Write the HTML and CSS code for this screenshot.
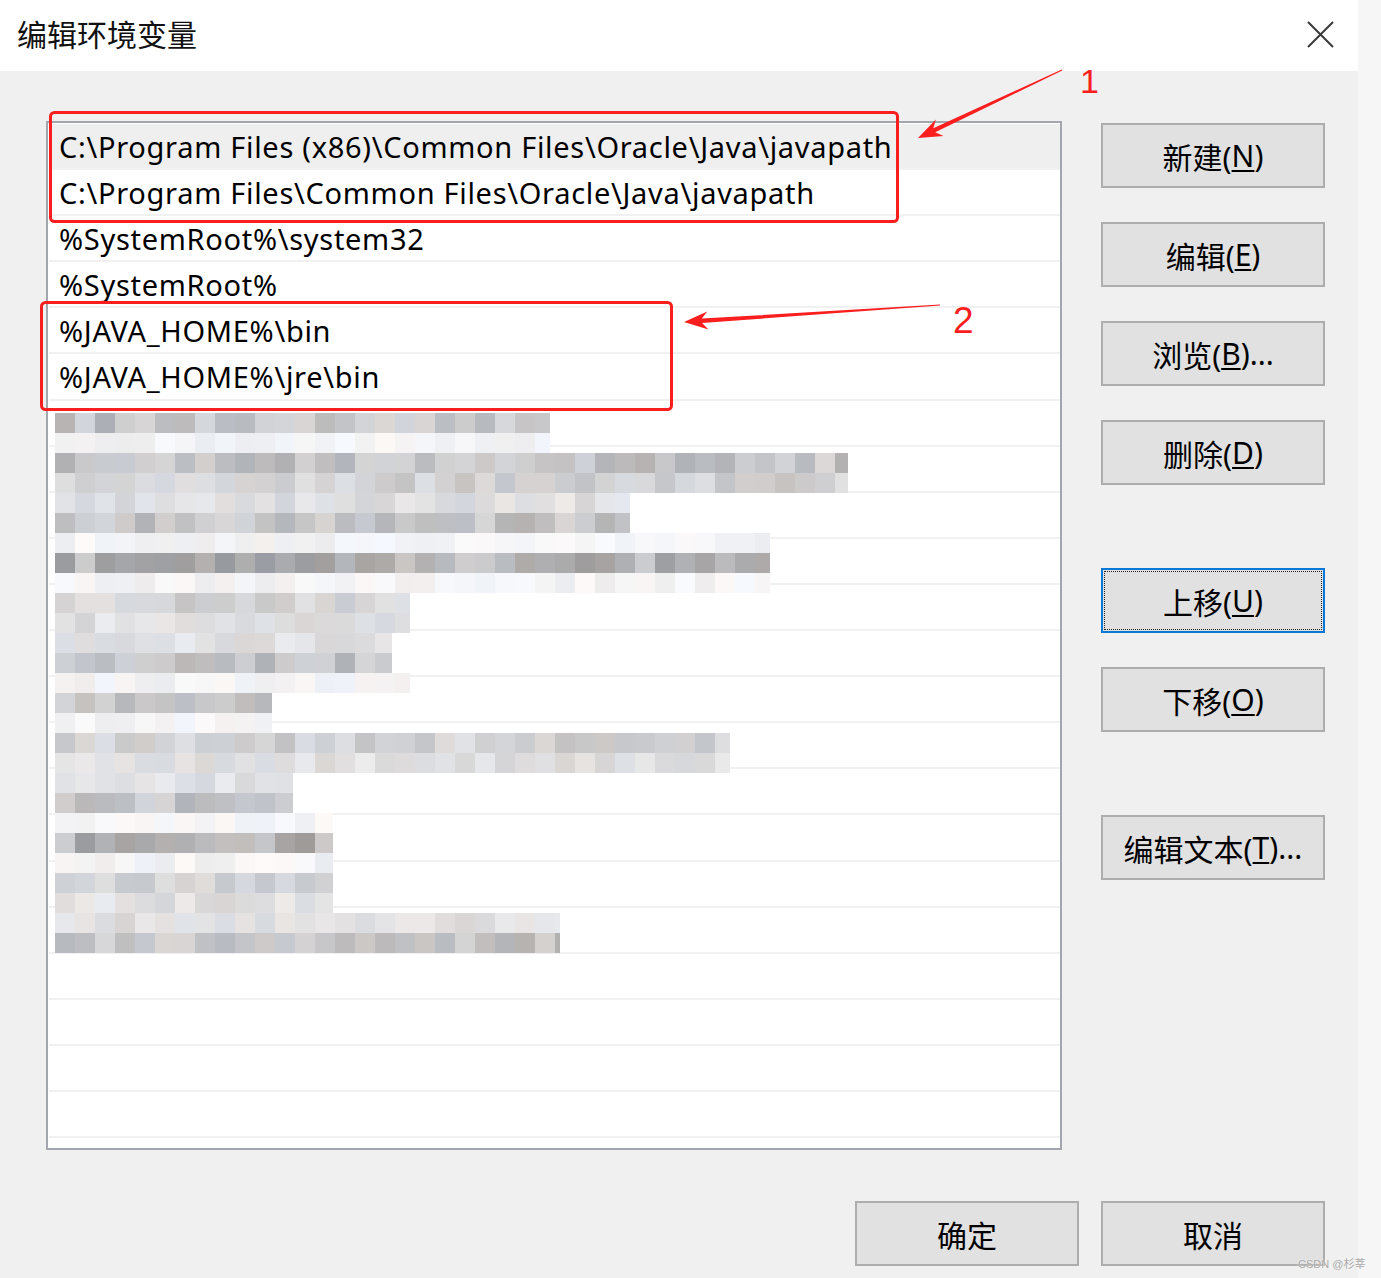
FILE: index.html
```html
<!DOCTYPE html>
<html lang="zh-CN">
<head>
<meta charset="utf-8">
<title>编辑环境变量</title>
<link rel="stylesheet" href="styles.css">
</head>
<body>
<div class="page">
  <div class="dialog">
    <div class="titlebar">
      <span class="title">编辑环境变量</span>
      <span class="close" aria-label="关闭">
        <svg width="27" height="27" viewBox="0 0 27 27"><path d="M1 1 L26 26 M26 1 L1 26" stroke="#3a3a3a" stroke-width="2" fill="none"/></svg>
      </span>
    </div>
    <div class="body">
      <div class="main">
        <div class="list">
          <div class="row hover">C:\Program Files (x86)\Common Files\Oracle\Java\javapath</div>
          <div class="row">C:\Program Files\Common Files\Oracle\Java\javapath</div>
          <div class="row">%SystemRoot%\system32</div>
          <div class="row">%SystemRoot%</div>
          <div class="row">%JAVA_HOME%\bin</div>
          <div class="row">%JAVA_HOME%\jre\bin</div>
          <div class="row"></div><div class="row"></div><div class="row"></div><div class="row"></div>
          <div class="row"></div><div class="row"></div><div class="row"></div><div class="row"></div>
          <div class="row"></div><div class="row"></div><div class="row"></div><div class="row"></div>
          <div class="row"></div><div class="row"></div><div class="row"></div><div class="row"></div>
        </div>
        <div class="side">
          <div class="btn">新建(<u>N</u>)</div>
          <div class="btn">编辑(<u>E</u>)</div>
          <div class="btn">浏览(<u>B</u>)...</div>
          <div class="btn">删除(<u>D</u>)</div>
          <div class="btn focus group">上移(<u>U</u>)</div>
          <div class="btn">下移(<u>O</u>)</div>
          <div class="btn group">编辑文本(<u>T</u>)...</div>
        </div>
      </div>
      <div class="footer">
        <div class="btn">确定</div>
        <div class="btn">取消</div>
      </div>
    </div>
  </div>

  <svg class="annot" width="1381" height="1278" viewBox="0 0 1381 1278">
    <g id="mosaic"></g>
    <rect x="50.5" y="112.5" width="847" height="109" rx="4" ry="4" fill="none" stroke="#fa1e1e" stroke-width="3"/>
    <rect x="41.5" y="302.5" width="630" height="107" rx="4" ry="4" fill="none" stroke="#fa1e1e" stroke-width="3"/>
    <polygon fill="#fa1e1e" points="918,138 943.5,135.9 935.2,132.3 1062.2,70.4 1061.8,69.6 933.3,128.3 935.9,119.6"/>
    <polygon fill="#fa1e1e" points="684,322 708.5,329.4 702.1,323.0 940,305.4 940,304.6 701.8,318.6 707.3,311.4"/>
  </svg>
  <span class="num num1">1</span>
  <span class="num num2">2</span>
  <span class="watermark">CSDN @杉莘</span>
</div>
<script src="script.js"></script>
</body>
</html>
```

FILE: styles.css
```css
* { box-sizing: border-box; }
html, body { margin: 0; padding: 0; }
body {
  background: #f6f6f6;
  font-family: "Noto Sans", "Noto Sans CJK SC", sans-serif;
  color: #000;
}
.page {
  position: relative;
  width: 1381px;
  height: 1278px;
  overflow: hidden;
}
.dialog {
  width: 1358px;
  height: 1278px;
  display: flex;
  flex-direction: column;
}
.titlebar {
  height: 71px;
  background: #fff;
  display: flex;
  align-items: center;
  justify-content: space-between;
  padding: 0 24px 0 17px;
}
.title {
  font-family: "Noto Sans CJK SC", sans-serif;
  font-size: 30px;
  color: #111;
  margin-top: -5px;
}
.close { display: flex; margin-top: -2px; }
.body {
  flex: 1;
  background: #f0f0f0;
  padding: 50px 33px 0 46px;
}
.main {
  display: flex;
  gap: 39px;
}
.list {
  width: 1016px;
  height: 1029px;
  background: #fff;
  border: 2px solid #a3a6ac;
  padding: 0 0 0 1px;
  overflow: hidden;
}
.row {
  height: 46.1px;
  border-bottom: 2px solid #f1f1f1;
  padding-left: 10px;
  font-size: 29px;
  letter-spacing: 0.7px;
  line-height: 46px;
  white-space: nowrap;
  color: #000;
}
.row:first-child { margin-top: 1px; }
.row.hover { background: #efefef; }
.side {
  width: 224px;
  display: flex;
  flex-direction: column;
  gap: 34px;
  padding-top: 2px;
}
.side .group { margin-top: 49px; }
.btn {
  width: 224px;
  height: 65px;
  border: 2px solid #adadad;
  background: #e1e1e1;
  display: flex;
  align-items: center;
  justify-content: center;
  font-size: 30px;
  color: #000;
  position: relative;
  white-space: nowrap;
}
.btn u {
  text-decoration-thickness: 2px;
  text-underline-offset: 3px;
}
.btn.focus { border-color: #0a78d7; }
.btn.focus::after {
  content: "";
  position: absolute;
  inset: 1px;
  border: 1px dotted #222;
}
.footer {
  display: flex;
  justify-content: flex-end;
  gap: 22px;
  margin-top: 51px;
}
.annot {
  position: absolute;
  left: 0;
  top: 0;
  pointer-events: none;
}
.num {
  position: absolute;
  color: #fa1e1e;
  font-family: "Liberation Sans", Arial, sans-serif;
  line-height: 1;
}
.num1 { left: 1080px; top: 64px; font-size: 34px; }
.num2 { left: 953px; top: 302px; font-size: 37px; }
.watermark {
  position: absolute;
  left: 1298px;
  top: 1255px;
  font-family: "Liberation Sans", "Noto Sans CJK SC", sans-serif;
  font-size: 11px;
  color: #a8a8a8;
  text-shadow: 0 0 2px #fff;
}
```

FILE: script.js
```js
(function () {
  var rows = [
    [413, 550, 'md'], [433, 550, 'vl'], [453, 848, 'md'], [473, 848, 'lm'],
    [493, 630, 'lt'], [513, 630, 'md'], [533, 770, 'vl'], [553, 770, 'dk'],
    [573, 770, 'vl'], [593, 410, 'lm'], [613, 410, 'lt'], [633, 392, 'lt'],
    [653, 392, 'md'], [673, 410, 'vl'], [693, 272, 'md'], [713, 272, 'vl'],
    [733, 730, 'lm'], [753, 730, 'lt'], [773, 293, 'lt'], [793, 293, 'md'],
    [813, 333, 'vl'], [833, 333, 'dk'], [853, 333, 'vl'], [873, 333, 'lm'],
    [893, 333, 'lt'], [913, 560, 'lt'], [933, 560, 'md']
  ];
  var levels = { dk: [180, 26], md: [196, 20], lm: [210, 16], lt: [224, 12], vl: [243, 7] };
  var seed = 12345;
  function rnd() { seed = (seed * 16807) % 2147483647; return seed / 2147483647; }
  var g = document.getElementById('mosaic');
  var ns = 'http://www.w3.org/2000/svg';
  rows.forEach(function (r) {
    var lv = levels[r[2]];
    for (var x = 55; x < r[1]; x += 20) {
      var v = Math.round(lv[0] + (rnd() - 0.5) * 2 * lv[1]);
      var t = Math.round((rnd() - 0.5) * 8);
      v = Math.min(252, Math.max(140, v));
      var rect = document.createElementNS(ns, 'rect');
      rect.setAttribute('x', x);
      rect.setAttribute('y', r[0]);
      rect.setAttribute('width', Math.min(20, r[1] - x));
      rect.setAttribute('height', 20);
      rect.setAttribute('fill', 'rgb(' + (v + t) + ',' + v + ',' + (v - t + 2) + ')');
      g.appendChild(rect);
    }
  });
})();
```
